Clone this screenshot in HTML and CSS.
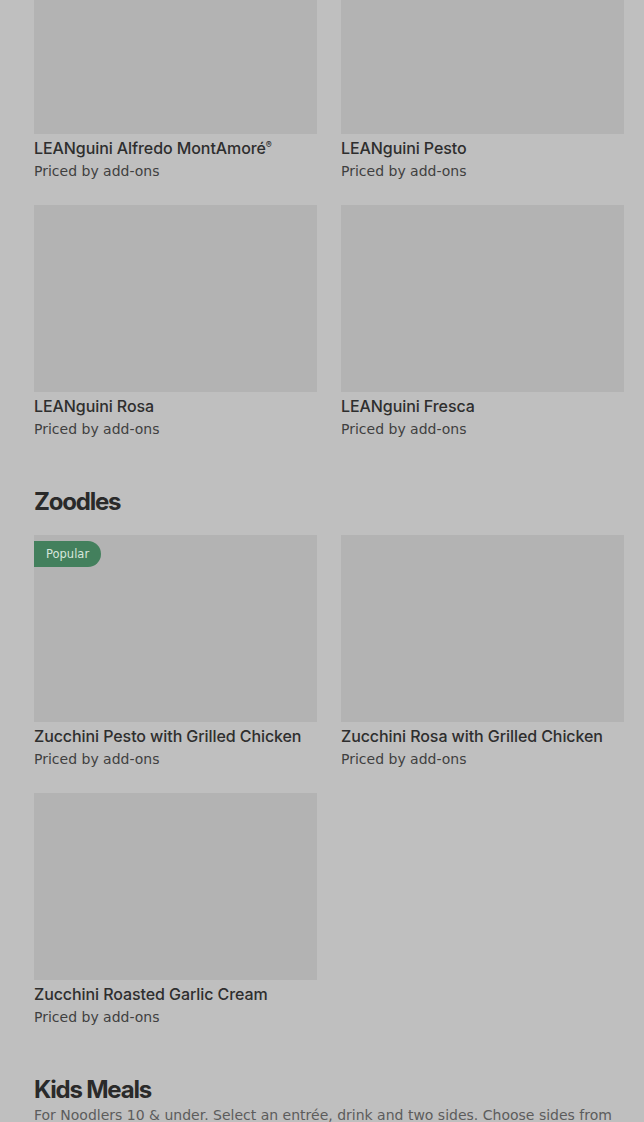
FILE: index.html
```html
<!DOCTYPE html>
<html>
<head>
<meta charset="utf-8">
<link rel="stylesheet" href="styles.css">
</head>
<body>
<main class="menu">
  <section class="section first">
    <div class="grid">
      <div class="card">
        <div class="thumb"></div>
        <div class="title">LEANguini Alfredo MontAmoré<sup class="reg">®</sup></div>
        <div class="sub">Priced by add-ons</div>
      </div>
      <div class="card">
        <div class="thumb"></div>
        <div class="title">LEANguini Pesto</div>
        <div class="sub">Priced by add-ons</div>
      </div>
      <div class="card">
        <div class="thumb"></div>
        <div class="title">LEANguini Rosa</div>
        <div class="sub">Priced by add-ons</div>
      </div>
      <div class="card">
        <div class="thumb"></div>
        <div class="title">LEANguini Fresca</div>
        <div class="sub">Priced by add-ons</div>
      </div>
    </div>
  </section>

  <section class="section">
    <h2 class="heading">Zoodles</h2>
    <div class="grid">
      <div class="card">
        <div class="thumb"><span class="badge">Popular</span></div>
        <div class="title">Zucchini Pesto with Grilled Chicken</div>
        <div class="sub">Priced by add-ons</div>
      </div>
      <div class="card">
        <div class="thumb"></div>
        <div class="title">Zucchini Rosa with Grilled Chicken</div>
        <div class="sub">Priced by add-ons</div>
      </div>
      <div class="card">
        <div class="thumb"></div>
        <div class="title">Zucchini Roasted Garlic Cream</div>
        <div class="sub">Priced by add-ons</div>
      </div>
    </div>
  </section>

  <section class="section">
    <h2 class="heading tight">Kids Meals</h2>
    <p class="desc">For Noodlers 10 &amp; under. Select an entrée, drink and two sides. Choose sides from</p>
  </section>
</main>
</body>
</html>
```
FILE: styles.css
```css
html, body {
  margin: 0;
  padding: 0;
  background: #bfbfbf;
  height: 1122px;
  overflow: hidden;
}
.menu {
  padding: 0 20px 0 34px;
  margin-top: -53px;
}
.section {
  padding-top: 47px;
}
.section.first {
  padding-top: 0;
}
.grid {
  display: grid;
  grid-template-columns: 283px 283px;
  column-gap: 24px;
  row-gap: 24px;
}
.card {
  display: flex;
  flex-direction: column;
}
.thumb {
  position: relative;
  height: 187px;
  background: #b3b3b3;
}
.badge {
  position: absolute;
  left: 0;
  top: 6px;
  height: 26px;
  line-height: 26px;
  padding: 0 12px 0 12px;
  background: #43805d;
  color: #d6e6dc;
  font-family: "DejaVu Sans", sans-serif;
  font-size: 11.5px;
  border-radius: 0 13px 13px 0;
}
.title {
  margin-top: 4px;
  font-family: Inter, sans-serif;
  font-weight: 500;
  font-size: 16px;
  line-height: 20px;
  letter-spacing: -0.08px;
  color: #2e2e2e;
}
.reg {
  font-size: 9px;
  vertical-align: 6px;
  line-height: 0;
}
.sub {
  margin-top: 3px;
  font-family: "DejaVu Sans", sans-serif;
  font-size: 14px;
  line-height: 20px;
  color: #3f3f3f;
}
.heading {
  margin: 0 0 17px 0;
  font-family: Inter, sans-serif;
  font-weight: 700;
  font-size: 24px;
  line-height: 32px;
  letter-spacing: -1.2px;
  color: #2a2a2a;
}
.heading.tight {
  margin-bottom: 0;
}
.desc {
  margin: 0;
  font-family: "DejaVu Sans", sans-serif;
  font-size: 14px;
  line-height: 18px;
  color: #5c5c5c;
  white-space: nowrap;
}
```
